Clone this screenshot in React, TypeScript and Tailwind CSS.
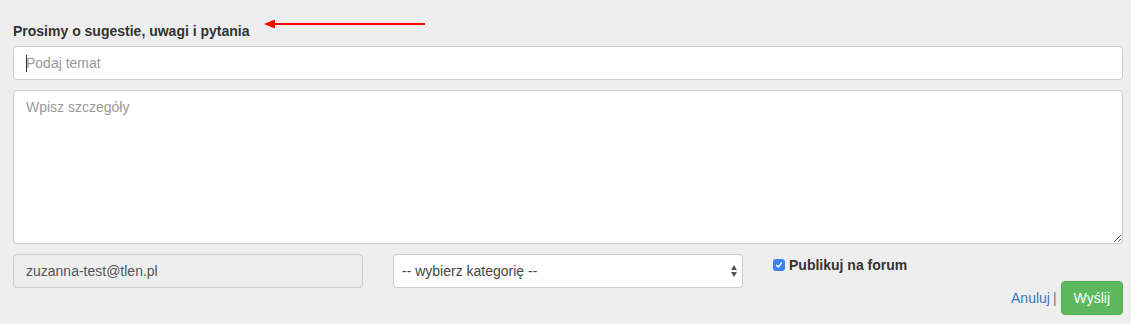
export default function App() {
    return (
        <div
            className="w-full min-h-screen bg-[#eeeeee] pl-[13px] pr-[8px] pt-[21px] text-[#333333]"
            style={{ fontFamily: '"Liberation Sans", Arial, sans-serif' }}
        >
            {/* Title + annotation arrow */}
            <div className="relative">
                <label className="block text-[14px] font-bold leading-5 mb-[5px]">
                    Prosimy o sugestie, uwagi i pytania
                </label>
                <svg
                    className="absolute left-[251px] top-[-2px]"
                    width="162"
                    height="10"
                    viewBox="0 0 162 10"
                >
                    <line x1="8" y1="5" x2="161" y2="5" stroke="#ff0000" strokeWidth="2" />
                    <polygon points="0,5 11,0.5 11,9.5" fill="#ff0000" />
                </svg>
            </div>

            {/* Subject */}
            <div className="relative">
                <input
                    type="text"
                    placeholder="Podaj temat"
                    className="block w-full h-[34px] px-3 text-[14px] bg-white border border-[#cccccc] rounded-[4px] outline-none placeholder:text-[#999999]"
                />
                <span className="absolute left-[13px] top-[9px] w-px h-[17px] bg-[#333333]" />
            </div>

            {/* Details */}
            <textarea
                placeholder="Wpisz szczegóły"
                className="block w-full h-[154px] mt-[10px] px-3 py-[6px] text-[14px] leading-5 bg-white border border-[#cccccc] rounded-[4px] outline-none placeholder:text-[#999999]"
            />

            {/* Bottom row */}
            <div className="grid grid-cols-3 gap-[30px] mt-[10px]">
                <input
                    type="text"
                    value="zuzanna-test@tlen.pl"
                    disabled
                    readOnly
                    className="block w-full h-[34px] px-3 text-[14px] text-[#555555] bg-[#eeeeee] border border-[#cccccc] rounded-[4px] outline-none"
                />

                <div className="relative">
                    <select className="block w-full h-[34px] pl-2 pr-6 text-[14px] text-[#444444] bg-white border border-[#cccccc] rounded-[4px] outline-none appearance-none">
                        <option>-- wybierz kategorię --</option>
                    </select>
                    <svg
                        className="absolute right-[6px] top-[11px] pointer-events-none"
                        width="6"
                        height="12"
                        viewBox="0 0 6 12"
                    >
                        <polygon points="3,0 6,5 0,5" fill="#555555" />
                        <polygon points="0,7 6,7 3,12" fill="#555555" />
                    </svg>
                </div>

                <div className="pt-[1px]">
                    <label className="flex items-center gap-[4px] text-[14px] font-bold leading-5">
                        <span className="flex items-center justify-center w-[12px] h-[12px] rounded-[3px] bg-[#3b82f6]">
                            <svg width="8" height="8" viewBox="0 0 8 8">
                                <path d="M1.5 4.2 L3.3 6 L6.5 1.8" fill="none" stroke="white" strokeWidth="1.4" strokeLinecap="round" strokeLinejoin="round" />
                            </svg>
                        </span>
                        Publikuj na forum
                    </label>

                    <div className="flex items-center justify-end mt-[6px]">
                        <a href="#" className="text-[14px] text-[#337ab7]">Anuluj</a>
                        <span className="text-[14px] text-[#777777] ml-[3px] mr-[4px]">|</span>
                        <button className="h-[34px] px-3 text-[14px] text-white bg-[#5cb85c] border border-[#4cae4c] rounded-[4px]">
                            Wyślij
                        </button>
                    </div>
                </div>
            </div>
        </div>
    );
}
